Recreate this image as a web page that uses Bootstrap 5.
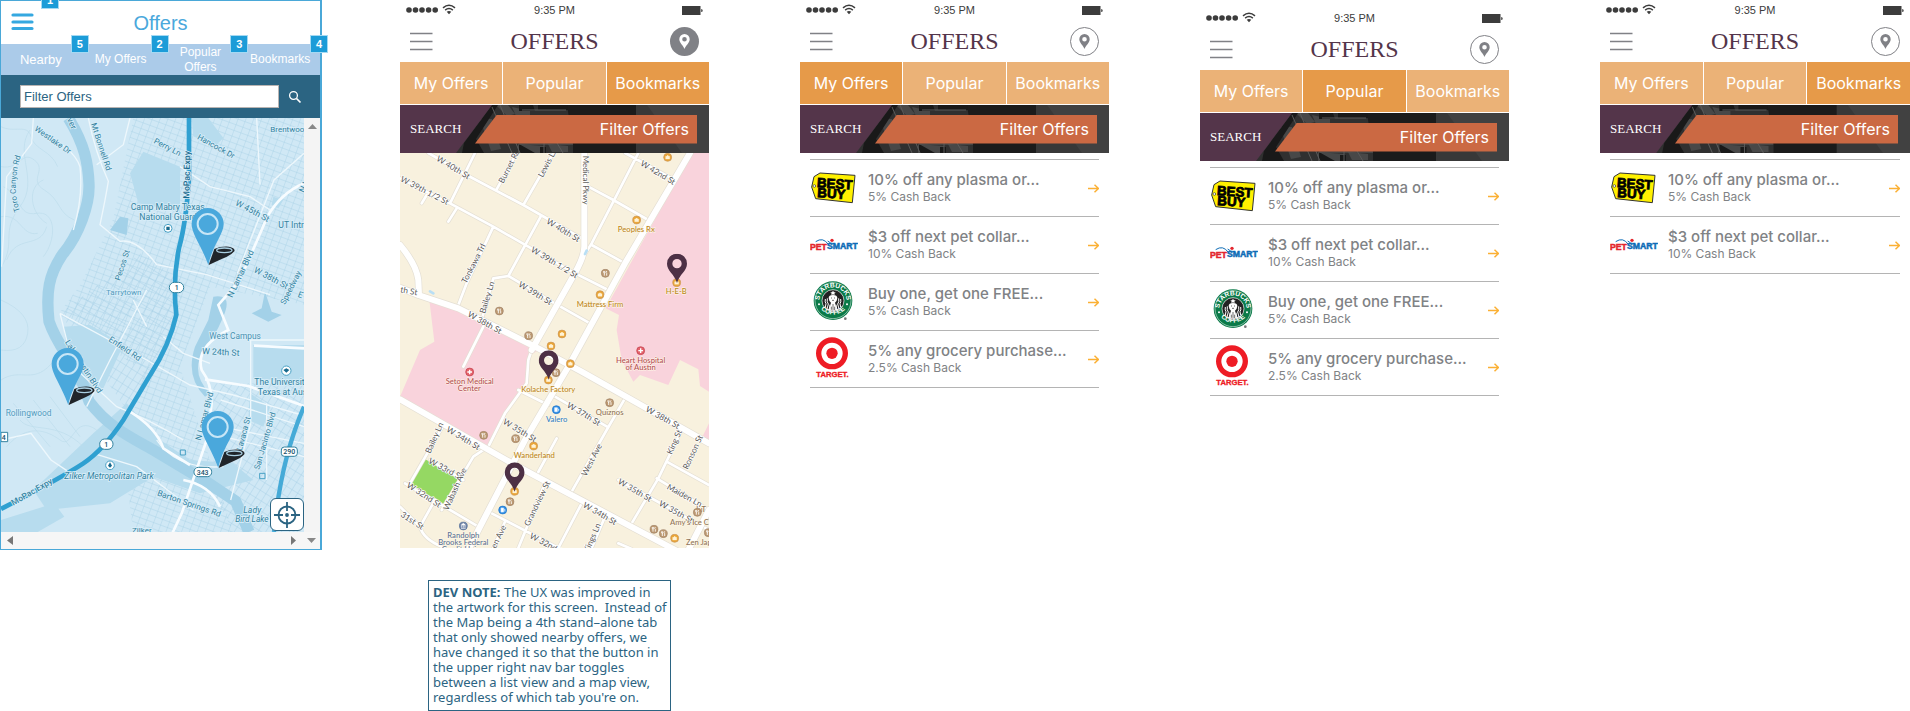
<!DOCTYPE html>
<html lang="en">
<head>
<meta charset="utf-8">
<meta name="viewport" content="width=device-width, initial-scale=1">
<title>Offers screens</title>
<link href="https://cdn.jsdelivr.net/npm/bootstrap@5.3.0/dist/css/bootstrap.min.css" rel="stylesheet">
<style>
body{background:#fff;font-family:"Liberation Sans",Arial,sans-serif}
.board{display:grid;grid-template-columns:minmax(0,400fr) minmax(0,400fr) minmax(0,400fr) minmax(0,400fr) minmax(0,310fr)}
.screen{margin-right:91px}
.screen.wire{margin-right:78px}
.screen.last{margin-right:0}
.lowered{padding-top:8px}
svg{display:block}
button{background:none;border:0;padding:0}
a{text-decoration:none}
/* wireframe */
.wire-frame{border:1px solid #4aa8d8;border-right-width:2px}
.wire-head{height:43px}
.wire-head h1{font-size:20px;line-height:24px;color:#4aa8dc;margin:0}
.wire-menu{left:10px;top:12px}
.tag{position:absolute;right:-8px;top:-9px;width:18px;height:18px;background:#1c9cd8;border:1px solid #a5d9f2;color:#fff;font-size:11px;line-height:16px;font-weight:bold;text-align:center;z-index:2}
.tag-menu{left:40px;right:auto;top:-10px}
.wire-tabs{background:#abcbe9;height:31px}
.wire-tabs a{flex:1 1 0;color:#fff;font-size:12px;line-height:15px;text-align:center}
.wire-tabs a.first-tab{font-size:13px}
.wire-search{background:#2b6482;height:43px;padding:0 18px 0 19px}
.wire-search input{min-width:0;height:23px;border:1px solid #b9b4b2;border-radius:0;padding:0 3px;font-size:13px;color:#2b6482;background:#fff}
.map-a{height:414px}
.map-a svg.map-art,.map-b svg{width:100%;height:100%}
.bar-v{width:16px;background:#f4f4f4;padding:6px 0}
.bar-h{height:17px;background:#f6f6f6;padding:0 3px 0 6px}
.locate{position:absolute;right:0;bottom:1px;width:34px;height:33px;border:1px solid #2b6482;border-radius:6px;background:#fff}
/* phone */
.status{height:20px;padding:0 6px;color:#3c3c3c;font-size:11px;line-height:20px}
.status-end{width:50px}
.phone-nav{height:42px;padding:0 10px}
.phone-nav h2{font-family:"Liberation Serif",serif;font-size:24px;line-height:28px;color:#54354a;margin:0}
.side{width:29px}
.tabs{gap:1px;height:43px;padding-bottom:1px}
.tabs a{flex:1 1 0;min-width:0;background:#ebb277;color:#fff;font:400 16px/20px Inter,sans-serif}
.tabs a.active{background:#e69a49}
.search{height:48px;background:#2d2d2d;padding:0 12px 0 75px}
.search .backdrop{position:absolute;inset:0;width:100%;height:100%}
.search label{position:absolute;left:10px;top:14px;color:#fff;font:13px/20px "Liberation Serif",serif}
.search input{position:relative;width:100%;height:29px;border:0;background:#cb6943;color:#fff;text-align:right;padding:0 8px 0 24px;font:400 16px/20px Inter,sans-serif;clip-path:polygon(22px 0,100% 0,100% 100%,0 100%)}
.search input::placeholder,.wire-search input::placeholder{color:inherit;opacity:1}
.offers{margin:6px 10px 0;border-top:1px solid #b4b4b4}
.offers a{height:57px;border-bottom:1px solid #b4b4b4;gap:10px;color:#808285;font-family:Inter,sans-serif}
.offers strong{font-weight:500;font-size:15px;line-height:20px}
.offers small{font-size:12px;line-height:13px}
.map-b{height:395px}
.note{margin:32px 38px 0 28px;border:1px solid #2b6482;color:#2b6482;padding:4px 4px 5px;font:13px/15px "Noto Sans",sans-serif;white-space:nowrap}
</style>
</head>
<body>
<svg width="0" height="0" class="position-absolute" aria-hidden="true">
<defs>
<symbol id="i-signal" viewBox="0 0 50 12"><g fill="#3c3c3c"><circle cx="3" cy="6" r="2.8"/><circle cx="9.500" cy="6" r="2.800"/><circle cx="16" cy="6" r="2.800"/><circle cx="22.600" cy="6" r="2.800"/><circle cx="29.200" cy="6" r="2.800"/></g><g fill="none" stroke="#3c3c3c" stroke-width="1.500"><path d="M37 3.800q6-5 12 0M39.100 6.100q3.900-3 7.800 0"/></g><path d="M40.700 7.800q2.300-1.500 4.600 0L43 10.200z" fill="#3c3c3c"/></symbol>
<symbol id="i-battery" viewBox="0 0 21 9"><path fill="#3c3c3c" d="M0 0h18.500v9H0zM19.200 3q1.500 0 1.500 1.500T19.200 6z"/></symbol>
<symbol id="i-lines" viewBox="0 0 23 19"><path d="M0 1.500h22.500M0 9.500h22.500M0 17.500h22.500" stroke="#808186" stroke-width="1.600"/></symbol>
<symbol id="i-place" viewBox="0 0 29 29"><circle cx="14.500" cy="14.500" r="14" fill="#fff" stroke="#808186"/><path fill="#808186" fill-rule="evenodd" d="M14.500 7a5.200 5.200 0 0 0-5.200 5.200c0 3.600 4 6.200 5.200 9.800 1.200-3.600 5.200-6.200 5.200-9.800A5.200 5.200 0 0 0 14.500 7zm0 3a2.300 2.300 0 1 1 0 4.600 2.300 2.300 0 0 1 0-4.600z"/></symbol>
<symbol id="i-place-on" viewBox="0 0 29 29"><circle cx="14.500" cy="14.500" r="14.500" fill="#808186"/><path fill="#fff" fill-rule="evenodd" d="M14.500 7a5.200 5.200 0 0 0-5.200 5.200c0 3.600 4 6.200 5.200 9.800 1.200-3.600 5.200-6.200 5.200-9.800A5.200 5.200 0 0 0 14.500 7zm0 3a2.300 2.300 0 1 1 0 4.600 2.300 2.300 0 0 1 0-4.600z"/></symbol>
<symbol id="i-arrow" viewBox="0 0 12 9"><path d="M1 4.500h10.500M7.500.8l4 3.700-4 3.700" fill="none" stroke="#fbb034" stroke-width="1.500"/></symbol>
<symbol id="logo-bestbuy" viewBox="45 0 144 168"><path d="M50 81 57 50 75 39l105 7-8 82-110-12z" fill="#fff100" stroke="#333" stroke-width="3"/><circle cx="58" cy="78" r="4" fill="#fff" stroke="#333" stroke-width="2"/><g font-family="Liberation Sans" font-weight="bold" font-size="40" fill="#000" stroke="#000" stroke-width="2.500" transform="rotate(4 65 84)"><text x="65" y="81">BEST</text><text x="68" y="111">BUY</text></g></symbol>
<symbol id="logo-petsmart" viewBox="45 0 144 168"><g font-family="Liberation Sans" font-weight="bold" font-size="26" stroke-width="1.500"><text x="45" y="98" fill="#e3262e" stroke="#e3262e">PET</text><text x="96" y="97" fill="#0d6cb6" stroke="#0d6cb6">SMART</text></g><path d="M62 74q22-15 38 8M98 72q8 8 20 8" fill="none" stroke="#0d6cb6" stroke-width="3"/><circle cx="111" cy="70" r="5" fill="#e3262e"/></symbol>
<symbol id="logo-starbucks" viewBox="45 0 144 168"><circle cx="114" cy="80" r="58" fill="#0a7a48"/><circle cx="114" cy="80" r="54" fill="none" stroke="#fff" stroke-width="1.500"/><circle cx="114" cy="80" r="33" fill="#222" stroke="#fff" stroke-width="2"/><path d="m114 50 3 5h5l-4 4 1 5-5-3-5 3 1-5-4-4h5z" fill="#fff"/><path d="M101 72q0-9 13-9t13 9q-1 10-7 14l6 22h-24l6-22q-6-4-7-14z" fill="#fff"/><path d="M97 73q-2 12 3 17l-4 15M131 73q2 12-3 17l4 15M91 75q-2 10 2 14l-2 10M137 75q2 10-2 14l2 10M105 92l-3 18M123 92l3 18" fill="none" stroke="#fff" stroke-width="3"/><path d="M108 72h3M117 72h3M111 79h6M114 90v18M109 98v10M119 98v10" stroke="#222" stroke-width="2"/><path id="arcTop" d="M75 94A41 41 0 1 1 153 94" fill="none"/><path id="arcLow" d="M66 88A51 51 0 0 0 162 88" fill="none"/><g font-family="Liberation Sans" font-weight="bold" fill="#fff" font-size="20"><text><textPath href="#arcTop" startOffset="50%" text-anchor="middle">STARBUCKS</textPath></text><text><textPath href="#arcLow" startOffset="50%" text-anchor="middle">COFFEE</textPath></text></g><circle cx="72" cy="91" r="3" fill="#fff"/><circle cx="156" cy="91" r="3" fill="#fff"/><circle cx="151" cy="134" r="4" fill="#777"/></symbol>
<symbol id="logo-target" viewBox="45 0 144 168"><circle cx="111" cy="67" r="40" fill="#fff" stroke="#ee1c25" stroke-width="16"/><circle cx="111" cy="67" r="17" fill="#ee1c25"/><text x="64" y="139" font-family="Liberation Sans" font-weight="bold" font-size="23" fill="#ee1c25" stroke="#ee1c25">TARGET.</text></symbol>
<symbol id="i-backdrop" viewBox="0 0 309 48" preserveAspectRatio="none"><path fill="#303030" d="M0 0h309v48H0z"/><path fill="#484848" d="m96 0 12 0 7 9-8 2zM80 14l12 0 9 30-10 2zM112 2l18 4v7l-14-2zM118 39l26 2v7h-26zM148 39l20 2v6h-16z"/><path fill="#191919" d="M64 38 92 0h6L76 34l8 14H62zM119 6h16l-2-6h-14zM138 0h30v5h-30zM119 39l16 9h-16zM140 42h6v6h-6z"/><path stroke="#5a5a5a" d="m92 2 20 46M100 0l20 48M119 39h54M144 38v10M157 38l6 10M122 5h44" fill="none"/><path fill="#1b1b1b" d="M167 0h69v48h-63v-9z"/><path fill="#383838" d="M236 0h73v48h-73z"/><path fill="#414141" d="m247 0h62v48h-27z"/><path fill="#54354a" d="M0 0h92L56 48H0z"/></symbol>
<symbol id="pin-blue" viewBox="0 0 140 180" overflow="visible"><path d="M53 173 70 125q20-9 44-7 20 4 16 14-10 12-38 23z" fill="#20252a"/><ellipse cx="100" cy="129" rx="23" ry="7" fill="#20252a" stroke="#a9cfe2" stroke-width="4"/><path d="M50 2A48 48 0 0 0 2 50c0 30 28 62 50 123C65 112 98 80 98 50A48 48 0 0 0 50 2z" fill="#4aa8dc"/><circle cx="50" cy="50" r="30" fill="#4aa8dc" stroke="#c8e6f6" stroke-width="6"/></symbol>
<symbol id="pin-dark" viewBox="0 0 60 90"><path fill="#4d3045" fill-rule="evenodd" d="M30 0A30 30 0 0 0 0 30c0 22 22 30 30 58 8-28 30-36 30-58A30 30 0 0 0 30 0zm0 16a14 14 0 1 1 0 28 14 14 0 0 1 0-28z"/></symbol>
<symbol id="poi-gold" viewBox="0 0 28 28"><circle cx="14" cy="14" r="12" fill="#eaa536" stroke="#c9955c" stroke-width="2"/><path d="M8 11h12v8H8zM11 11q3-6 6 0" fill="#fff3d6" stroke="#fff3d6"/></symbol>
<symbol id="poi-food" viewBox="0 0 28 28"><circle cx="14" cy="14" r="12" fill="#bd9a72" stroke="#9e8166" stroke-width="2"/><path d="M9 7v5q3 3 3 0V7M11 12v9M18 7q-4 5 0 7v7" fill="none" stroke="#fff" stroke-width="2.500"/></symbol>
<symbol id="poi-med" viewBox="0 0 28 28"><circle cx="14" cy="14" r="12" fill="#e4646c" stroke="#bf3d4c" stroke-width="2"/><path d="M14 7v14M7 14h14" stroke="#fff" stroke-width="4"/></symbol>
<symbol id="poi-fuel" viewBox="0 0 28 28"><circle cx="14" cy="14" r="12" fill="#2f8de4" stroke="#1d74c9" stroke-width="2"/><path d="M9 8h8v12H9zM18 10l3 3v6" fill="#fff" stroke="#d7ebff" stroke-width="2"/></symbol>
<symbol id="poi-bank" viewBox="0 0 28 28"><circle cx="14" cy="14" r="12" fill="#7287a9" stroke="#556f98" stroke-width="2"/><path d="M8 11l6-5 6 5zM9 12v7M14 12v7M19 12v7M7 21h14" fill="#fff" stroke="#fff" stroke-width="2"/></symbol>
<pattern id="blocks" width="22" height="18" patternUnits="userSpaceOnUse" patternTransform="rotate(20)"><path d="M0 0h22M0 0v18" stroke="#a6d0e6" stroke-width="2.500" fill="none"/></pattern>
<pattern id="blocks2" width="20" height="26" patternUnits="userSpaceOnUse" patternTransform="rotate(32)"><path d="M0 0h20M0 0v26" stroke="#a6d0e6" stroke-width="2.500" fill="none"/></pattern>
</defs>
</svg>

<main class="board">
<section class="screen wire">
<div class="wire-frame">
  <header class="wire-head position-relative d-flex align-items-center justify-content-center">
    <button class="wire-menu position-absolute" type="button" aria-label="Menu"><svg width="23" height="18" viewBox="0 0 23 18"><path d="M2 2h19M2 9h19M2 15.500h19" stroke="#35a8e0" stroke-width="3.200" stroke-linecap="round"/></svg></button>
    <span class="tag tag-menu">1</span>
    <h1>Offers</h1>
  </header>
  <nav class="wire-tabs d-flex">
    <a href="#" class="first-tab position-relative d-flex align-items-center justify-content-center">Nearby<span class="tag">5</span></a>
    <a href="#" class="position-relative d-flex align-items-center justify-content-center">My Offers<span class="tag">2</span></a>
    <a href="#" class="position-relative d-flex align-items-center justify-content-center">Popular<br>Offers<span class="tag">3</span></a>
    <a href="#" class="position-relative d-flex align-items-center justify-content-center">Bookmarks<span class="tag">4</span></a>
  </nav>
  <form class="wire-search d-flex align-items-center gap-2">
    <input class="flex-grow-1" type="text" placeholder="Filter Offers" aria-label="Filter Offers">
    <button type="button" aria-label="Search"><svg width="15" height="14" viewBox="0 0 15 14"><circle cx="6.500" cy="5.500" r="3.900" fill="none" stroke="#fff" stroke-width="1.300"/><path d="m9.500 8.500 4 4" stroke="#fff" stroke-width="1.700"/></svg></button>
  </form>
  <div class="d-flex">
    <div class="map-a position-relative flex-grow-1">
    <svg class="map-art" viewBox="3 354 909 1242" preserveAspectRatio="xMidYMid slice" font-family="Roboto, sans-serif" font-size="26" fill="#32829f">
      <path fill="#d0e8f5" d="M3 354h909v1242H3z"/>
      <path fill="url(#blocks)" d="M400 354h512v560L630 860 540 1100 700 1596H400l-30-230 60-250-250-180 60-80 100-200z"/>
      <path fill="url(#blocks2)" d="M180 940 420 760l140 90-70 210-110 170-200-290zM640 1150h272v446H700l-60-120z"/>
      <path fill="#b7dcee" d="M390 520 430 455l110 45v135L415 610zM575 354h50l45 60-25 25-65-30zM190 980l80-5 100 60-60 130-90-10zM760 1035h152v110l-152-10zM750 1180l60 40-20 60-45-20zM820 590l30 10-15 25-20-10zM280 1300l100-90 100 110 90 60 130 10 60 50-160 40-140-50-130 80-190 20-40-60zM3 1560l160-50 30 40-80 46H3z"/>
      <path d="M205 354c50 80 60 140 62 200s-30 150-80 210c-40 60-50 110-40 200 30 90 90 130 120 240 60 80 130 110 200 150l150 90 90 60 40 92" fill="none" stroke="#a3d1e8" stroke-width="34" stroke-linejoin="round"/>
      <path d="M330 690l30-40 25 5-5 50zM640 890q60-10 30 60t-60 100q-40 70 20 130l-15 10q-60-60-30-150l40-80zM755 940l30-15 10-50 20 60 30 10-40 20z" fill="#a3d1e8"/>
      <g fill="none" stroke="#bcdcec" stroke-width="2"><path d="M3 500c60 10 60-50 100-20s-20 60 30 90 40 70 90 90M10 560c60 30 40 90 100 80s60 80 20 130M3 380c40 20 80-10 90 30s60 40 80 90M3 650c60-10 60 60 110 50M20 780c30-80 100-30 120-100M90 390c-50 70 30 150-30 230s-10 100-55 180M3 1140c60-40 100 20 160-60M20 1340c60-70 120-50 160-20s40-80 110-30M60 1260c30 40 110 0 190 80M3 900q90 40 80 100t-80 50M130 540c-50 20-40 100 10 130M40 1210l110 130M100 1200l110 140M150 1190l90 120"/></g>
      <g fill="none" stroke="#edf7fc" stroke-width="4"><path d="M100 354 95 430 20 530 5 800M110 390q110 50 130 110 10 90-20 190M265 354q20 100 60 190-10 60-25 130l60 50q50-10 110 70l150 30 190 60M390 354l-20 80-80 60M540 500l90 60 120 30 60 40M770 354l10 200M912 460l-90 80-110 280M180 940l260 140 130 75 130 30 205 60M180 940l40 160 130 120q100 40 200 100M490 1010l60 50 80 30M400 900l40 80M440 870 330 1080 260 1220M3 1320l90-20 60 80 60 40M280 1360l130 40 80 60 90 70M912 1020l-160 0 0 250-60 230M800 1210v230M912 1280l-250-80M912 1330l-300-60M912 1370l-320-80M470 1320q60 90 200 80"/></g>
      <g fill="none" stroke="#f7fcff" stroke-width="8"><path d="M912 550q-70 30-110 100L720 840l-65 75 30 75q-100 50-80 120 30 40 30 100l-15 110-75 220-70 150M912 1045l-150-8M615 1138l130 20 167 60"/><path d="M550 1440q80 15 110 80M390 1235q80 50 100 110l80 50"/></g>
      <path d="M567 354v180q-8 130-30 210-20 100-8 200-20 90-78 180L370 1260q-60 90-120 130T3 1527" fill="none" stroke="#2fa0d1" stroke-width="14"/>
      <path d="M912 1220q-70 160-90 376" fill="none" stroke="#45aad7" stroke-width="13"/>
      <g stroke="#d9eef9" stroke-width="5" paint-order="stroke">
      <text transform="translate(102 390) rotate(35)" font-size="24">Westlake Dr</text><text transform="translate(200 358) rotate(65)">ver</text><text transform="translate(273 372) rotate(72)" font-size="24">Mt Bonnell Rd</text><text transform="translate(460 428) rotate(28)" font-size="24">Perry Ln</text><text transform="translate(590 416) rotate(29)" font-size="24">Hancock Dr</text><path id="toro" d="M60 634Q34 560 62 470" fill="none" stroke="none"/><text font-size="24"><textPath href="#toro">Toro Canyon Rd</textPath></text><text transform="translate(568 596) rotate(-89)" font-weight="500" fill="#17698d">MoPac Expy</text>
      <text x="811" y="396" font-size="24">Brentwoo</text><text x="392" y="629">Camp Mabry Texas</text><text x="418" y="660">National Guard</text><text transform="translate(704 614) rotate(28)">W 45th St</text><text x="835" y="683">UT Intr</text><text transform="translate(760 815) rotate(28)">W 38th St</text><text transform="translate(912 580) rotate(-65)">N I</text>
      <text transform="translate(360 843) rotate(-72)" font-size="24">Pecos St</text><text x="318" y="884" font-size="24" fill="#529bbd">Tarrytown</text><text transform="translate(697 895) rotate(-65)">N Lamar Blvd</text><text transform="translate(855 915) rotate(-63)" font-size="24">Speedway</text><text x="628" y="1018" font-size="25" fill="#4a91b1">West Campus</text><text transform="translate(606 1062) rotate(3)">W 24th St</text><text transform="translate(324 1022) rotate(34)" font-size="25">Enfield Rd</text><text transform="translate(194 1027) rotate(57)" font-size="25">Lake Austin Blvd</text><text x="17" y="1249" font-size="25" fill="#529bbd">Rollingwood</text><text x="763" y="1156">The Universit</text><text x="773" y="1186">Texas at Aus</text><text transform="translate(602 1323) rotate(-75)" font-size="25">N Lamar Blvd</text><text transform="translate(725 1353) rotate(-75)" font-size="24">Lavaca St</text><text transform="translate(778 1410) rotate(-74)" font-size="24">San Jacinto Blvd</text><text x="193" y="1438" font-style="italic">Zilker Metropolitan Park</text><text transform="translate(470 1486) rotate(19)" font-size="25">Barton Springs Rd</text><text transform="translate(40 1517) rotate(-30)" font-weight="500" font-size="25">MoPac Expy</text><text x="730" y="1538" font-style="italic">Lady</text><text x="706" y="1567" font-style="italic" font-size="25">Bird Lake</text><text x="396" y="1600" font-size="24">Zilker</text><text transform="translate(892 890) rotate(20)">E 3</text></g>
      <g fill="#fff" stroke="#32829f" stroke-width="3"><rect x="508" y="847" width="43" height="31" rx="15"/><rect x="299" y="1317" width="40" height="31" rx="15"/><rect x="582" y="1402" width="53" height="28" rx="13"/><rect x="844" y="1341" width="48" height="28" rx="9"/><path d="M3 1297h20v28H3z"/></g>
      <g font-size="21" fill="#20506a" font-weight="500"><text x="524" y="870">1</text><text x="313" y="1340">1</text><text x="590" y="1424">343</text><text x="850" y="1363">290</text><text x="5" y="1319">4</text></g>
      <g fill="#fff" stroke="#48a0c4" stroke-width="3"><circle cx="504" cy="685" r="12"/><circle cx="330" cy="1396" r="13"/><circle cx="859" cy="1112" r="14"/><path d="M541 1350h15v15h-15zM779 1420h16v16h-16z" fill="none"/></g><path d="M499 680h10v10h-10zM324 1397l6-10 6 10-6 6zM850 1110l9-5 9 5-9 8z" fill="#17698d"/>
      <use href="#pin-blue" x="573" y="622" width="140" height="180"/><use href="#pin-blue" x="153" y="1042" width="140" height="180"/><use href="#pin-blue" x="603" y="1231" width="140" height="180"/>
    </svg>
    <button class="locate d-flex align-items-center justify-content-center" type="button" aria-label="My location"><svg width="26" height="26" viewBox="0 0 26 26" fill="none" stroke="#2b6482" stroke-width="1.800"><circle cx="13" cy="13" r="8.500"/><path d="M13 0v9M13 17v9M0 13h9M17 13h9"/><circle cx="13" cy="13" r="1" fill="#2b6482"/></svg></button>
    </div>
    <div class="bar-v d-flex justify-content-center"><svg width="9" height="5"><path d="M0 5 4.500 0 9 5z" fill="#888"/></svg></div>
  </div>
  <div class="bar-h d-flex align-items-center justify-content-between">
    <svg width="6" height="9"><path d="M6 0 0 4.500 6 9z" fill="#777"/></svg>
    <span class="d-flex align-items-center gap-2"><svg width="6" height="9"><path d="M0 0 5 4.500 0 9z" fill="#777"/></svg><svg width="12" height="5"><path d="M2 0h9L6.500 5z" fill="#888"/></svg></span>
  </div>
</div>
</section>

<section class="screen" data-active="2" data-map="1"></section>
<section class="screen" data-active="0" data-rows="4"></section>
<section class="screen lowered" data-active="1" data-rows="4"></section>
<section class="screen last" data-active="2" data-rows="2"></section>
</main>

<template id="street-map">
<div class="map-b"><svg viewBox="15 9 927 1185" preserveAspectRatio="xMidYMid slice" font-family="Lato, sans-serif" font-size="25">
<path fill="#f8f1de" d="M15 9h927v1188H15z"/>
<path fill="#f9d3dc" d="M890 9h52v716l-27-17-5-50-55-28-35 75-85-30-20 20-35-65-15-90 7-45-40-20zM103 450l87 28 240 122-30 20-5 80-65 90-55 100L15 740l60-140 43-25zM942 820v60l-22-15z"/>
<path fill="#95d863" d="m85 925 110 60-45 83-102-63z"/>
<g fill="none" stroke-linejoin="round" stroke-linecap="round">
<path d="M100 9l115 66 170 90 175 100M15 85l150 75 130 70 105 60 130 75 110 55M340 378l130 77 115 65M240 9l-75 151M185 175l-25 40M95 135l-15 25M365 9l-60 109M475 9l-90 156M437 200l-97 178-45 7-35 125M295 230l-80 170-25 65M730 9l-75 146-65 125-25 40M690 9l140 76M580 110l75 40 105 60M590 285l100 55M265 530l-60 120M410 600l-10 30-5 70-65 90-50 100-45 30-95 160M370 720l90 45M480 740l160 92M690 745l-55 95-105 185M485 865l-60 110M860 840l-70 145-80 135M815 935l127 70M785 985l157 95M670 990l272 150M450 1000l-80 194M290 1090l200 104M560 1060l-70 134M330 1115l-35 79M630 1100l-40 94M15 1070l60 60q10 40 75 64M30 1000l220 130M140 835l-95 165M105 930l100 60M120 1050l-45 80M670 1180l40 17" stroke="#e4dfd4" stroke-width="12"/>
<path d="M100 9l115 66 170 90 175 100M15 85l150 75 130 70 105 60 130 75 110 55M340 378l130 77 115 65M240 9l-75 151M185 175l-25 40M95 135l-15 25M365 9l-60 109M475 9l-90 156M437 200l-97 178-45 7-35 125M295 230l-80 170-25 65M730 9l-75 146-65 125-25 40M690 9l140 76M580 110l75 40 105 60M590 285l100 55M265 530l-60 120M410 600l-10 30-5 70-65 90-50 100-45 30-95 160M370 720l90 45M480 740l160 92M690 745l-55 95-105 185M485 865l-60 110M860 840l-70 145-80 135M815 935l127 70M785 985l157 95M670 990l272 150M450 1000l-80 194M290 1090l200 104M560 1060l-70 134M330 1115l-35 79M630 1100l-40 94M15 1070l60 60q10 40 75 64M30 1000l220 130M140 835l-95 165M105 930l100 60M120 1050l-45 80M670 1180l40 17" stroke="#fff" stroke-width="8"/>
<path d="M15 285q50 60 55 105l2 45M15 413l55 22 120 40 240 120 130 70 382 215M568 9v280q0 30-28 80L410 600M885 9 690 340 520 650 390 870 250 1140l-30 60M15 748l345 197 160 85 330 175M942 1080l-62 120" stroke="#e4dfd4" stroke-width="22"/>
<path d="M15 285q50 60 55 105l2 45M15 413l55 22 120 40 240 120 130 70 382 215M568 9v280q0 30-28 80L410 600M885 9 690 340 520 650 390 870 250 1140l-30 60M15 748l345 197 160 85 330 175M942 1080l-62 120" stroke="#fff" stroke-width="18"/>
<path d="m570 312 5-10M105 424l10 6" stroke="#b9dff5" stroke-width="8"/></g>
<g fill="#5c5a57" stroke="#fff" stroke-width="4" paint-order="stroke">
<text transform="translate(122 31) rotate(31)">W 40th St</text><text transform="translate(14 93) rotate(27)">W 39th 1/2 St</text><text transform="translate(325 102) rotate(-63)">Burnet Rd</text><text transform="translate(443 84) rotate(-62)">Lewis Ln</text><text transform="translate(563 17) rotate(90)" font-size="24">Medical Pkwy</text><text transform="translate(734 45) rotate(31)">W 42nd St</text><text transform="translate(452 219) rotate(31)">W 40th St</text><text transform="translate(406 304) rotate(31)">W 39th 1/2 St</text><text transform="translate(368 408) rotate(31)">W 39th St</text><text transform="translate(214 402) rotate(-63)">Tonkawa Trl</text><text transform="translate(270 492) rotate(-73)">Bailey Ln</text><text transform="translate(15 427) rotate(10)">th St</text><text transform="translate(216 498) rotate(29)">W 38th St</text>
<text transform="translate(152 843) rotate(31)">W 34th St</text><text transform="translate(322 820) rotate(31)">W 35th St</text><text transform="translate(514 770) rotate(31)">W 37th St</text><text transform="translate(750 783) rotate(29)">W 38th St</text><text transform="translate(106 912) rotate(-66)">Bailey Ln</text><text transform="translate(98 938) rotate(28)">W 33rd St</text><text transform="translate(33 1010) rotate(33)">W 32nd St</text><text transform="translate(160 1082) rotate(-66)">Wabash Ave</text><text transform="translate(15 1098) rotate(33)">31st St</text><text transform="translate(574 980) rotate(-63)">West Ave</text><text transform="translate(830 915) rotate(-66)">King St</text><text transform="translate(878 960) rotate(-65)">Ronson St</text><text transform="translate(667 1000) rotate(30)">W 35th St</text><text transform="translate(814 1016) rotate(29)">Maiden Ln</text><text transform="translate(790 1066) rotate(29)">W 35th St</text><text transform="translate(562 1070) rotate(30)">W 34th St</text><text transform="translate(402 1130) rotate(-64)">Grandview St</text><text transform="translate(402 1163) rotate(28)">W 32nd St</text><text transform="translate(302 1197) rotate(-64)">en Ave</text><text transform="translate(580 1210) rotate(-66)">Kings Ln</text></g>
<g font-weight="500" text-anchor="middle" stroke="#fff9e8" stroke-width="3" paint-order="stroke" font-size="23">
<g fill="#bb861c"><text x="724" y="245">Peoples Rx</text><text x="844" y="433">H-E-B</text><text x="615" y="470">Mattress Firm</text><text x="460" y="726">Kolache Factory</text><text x="418" y="923">Wanderland</text></g>
<g fill="#b34b55"><text x="737" y="638">Heart Hospital</text><text x="737" y="659">of Austin</text><text x="224" y="702">Seton Medical</text><text x="223" y="724">Center</text></g>
<g fill="#8f7358"><text x="644" y="794">Quiznos</text></g><text x="485" y="815" fill="#347fc5">Valero</text>
<g fill="#8f7358" text-anchor="start"><text x="825" y="1125">Amy's Ice Cr</text><text x="873" y="1185">Zen Japa</text><text x="900" y="1085">JuT</text></g>
<g fill="#5b7196"><text x="205" y="1165">Randolph</text><text x="205" y="1186">Brooks Federal</text><text x="205" y="1207">Credit Union</text></g></g>
<g><use href="#poi-gold" x="804" y="8" width="28" height="28"/><use href="#poi-gold" x="711" y="196" width="28" height="28"/><use href="#poi-gold" x="831" y="384" width="28" height="28"/><use href="#poi-gold" x="601" y="420" width="28" height="28"/><use href="#poi-gold" x="487" y="538" width="28" height="28"/><use href="#poi-gold" x="454" y="574" width="28" height="28"/><use href="#poi-gold" x="512" y="627" width="28" height="28"/><use href="#poi-gold" x="446" y="676" width="28" height="28"/><use href="#poi-gold" x="402" y="874" width="28" height="28"/><use href="#poi-gold" x="345" y="1010" width="28" height="28"/><use href="#poi-gold" x="825" y="1151" width="28" height="28"/>
<use href="#poi-food" x="617" y="356" width="28" height="28"/><use href="#poi-food" x="299" y="469" width="28" height="28"/><use href="#poi-food" x="387" y="543" width="28" height="28"/><use href="#poi-food" x="469" y="654" width="28" height="28"/><use href="#poi-food" x="630" y="744" width="28" height="28"/><use href="#poi-food" x="252" y="842" width="28" height="28"/><use href="#poi-food" x="348" y="852" width="28" height="28"/><use href="#poi-food" x="331" y="1041" width="28" height="28"/><use href="#poi-food" x="893" y="1073" width="28" height="28"/><use href="#poi-food" x="763" y="1124" width="28" height="28"/><use href="#poi-food" x="791" y="1137" width="28" height="28"/><use href="#poi-food" x="926" y="1134" width="28" height="28"/>
<use href="#poi-med" x="723" y="588" width="28" height="28"/><use href="#poi-med" x="210" y="652" width="28" height="28"/><use href="#poi-fuel" x="470" y="765" width="28" height="28"/><use href="#poi-fuel" x="309" y="1066" width="28" height="28"/><use href="#poi-bank" x="191" y="1114" width="28" height="28"/></g>
<use href="#pin-dark" x="816" y="311" width="60" height="90"/><use href="#pin-dark" x="431" y="601" width="60" height="90"/><use href="#pin-dark" x="329" y="937" width="60" height="90"/>
</svg></div>
<div class="note"><strong>DEV NOTE:</strong> The UX was improved in<br>the artwork for this screen.&nbsp; Instead of<br>the Map being a 4th stand–alone tab<br>that only showed nearby offers, we<br>have changed it so that the button in<br>the upper right nav bar toggles<br>between a list view and a map view,<br>regardless of which tab you're on.</div>
</template>

<script src="https://cdn.jsdelivr.net/npm/bootstrap@5.3.0/dist/js/bootstrap.bundle.min.js"></script>
<script>
const tabs = ['My Offers', 'Popular', 'Bookmarks'];
const offers = [
  ['bestbuy', '10% off any plasma or...', '5% Cash Back'],
  ['petsmart', '$3 off next pet collar...', '10% Cash Back'],
  ['starbucks', 'Buy one, get one FREE...', '5% Cash Back'],
  ['target', '5% any grocery purchase...', '2.5% Cash Back']
];
const icon = (id, w, h) => `<svg width="${w}" height="${h}" class="flex-shrink-0" aria-hidden="true"><use href="#${id}" width="${w}" height="${h}"/></svg>`;

document.querySelectorAll('.screen[data-active]').forEach((el, n) => {
  const isMap = !!el.dataset.map;
  const tabLinks = tabs.map((t, i) =>
    `<a href="#" class="d-flex align-items-center justify-content-center${i == el.dataset.active ? ' active' : ''}">${t}</a>`).join('');
  const rows = offers.slice(0, +el.dataset.rows || 0).map(([logo, title, sub]) =>
    `<a href="#" class="d-flex align-items-center">${icon('logo-' + logo, 48, 56)}
     <span class="flex-grow-1 d-flex flex-column text-nowrap pb-1"><strong>${title}</strong><small>${sub}</small></span>${icon('i-arrow', 12, 9)}</a>`).join('');
  el.innerHTML = `
    <div class="status d-flex align-items-center justify-content-between">${icon('i-signal', 50, 12)}<span>9:35 PM</span>
      <span class="status-end d-flex justify-content-end">${icon('i-battery', 21, 9)}</span></div>
    <header class="phone-nav d-flex align-items-center justify-content-between">
      <button type="button" class="side" aria-label="Menu">${icon('i-lines', 23, 19)}</button>
      <h2>OFFERS</h2>
      <button type="button" class="side" aria-label="Toggle map">${icon(isMap ? 'i-place-on' : 'i-place', 29, 29)}</button>
    </header>
    <nav class="tabs d-flex">${tabLinks}</nav>
    <form class="search position-relative d-flex align-items-center">
      <svg class="backdrop" aria-hidden="true"><use href="#i-backdrop" width="100%" height="100%"/></svg>
      <label for="filter${n}">SEARCH</label><input id="filter${n}" type="text" placeholder="Filter Offers">
    </form>` + (isMap ? '' : `<div class="offers">${rows}</div>`);
  if (isMap) el.append(document.getElementById('street-map').content.cloneNode(true));
});
</script>
</body>
</html>
